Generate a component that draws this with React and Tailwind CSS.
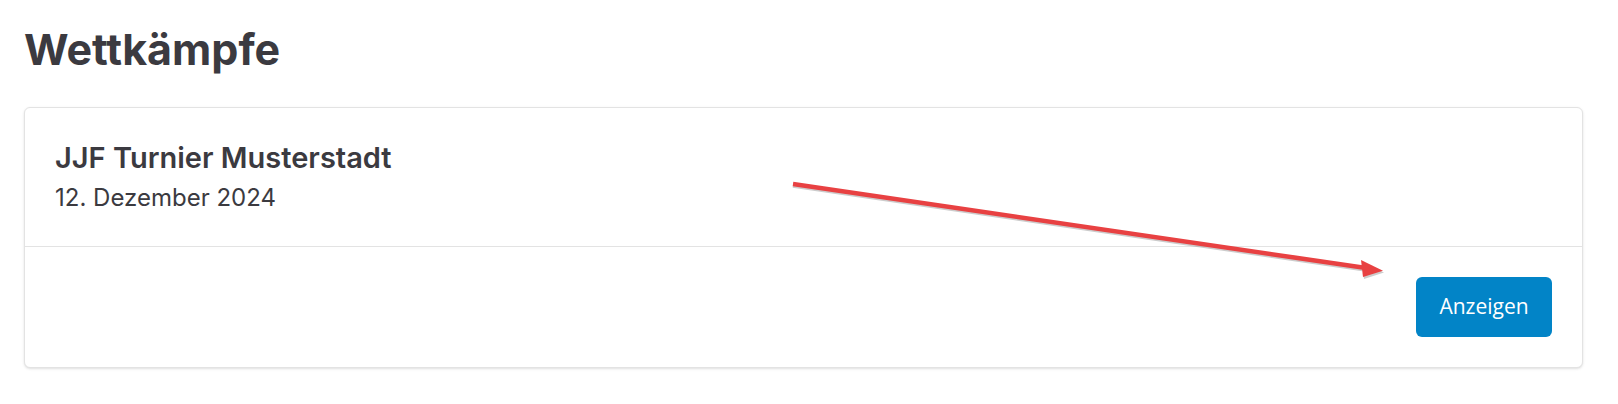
export default function App() {
  return (
    <div
      className="relative min-h-[404px] w-[1618px] bg-white pl-6 pt-[23px]"
      style={{ fontFamily: "Inter, 'Noto Sans', sans-serif" }}
    >
      <h1 className="text-[43px] font-bold leading-[53px] text-[#3b3a40]">
        Wettkämpfe
      </h1>
      <div className="mt-[31px] w-[1559px] rounded-md border border-[#e3e3e3] bg-white shadow-sm">
        <div className="border-b border-[#e3e3e3] px-[30px] pt-[30px] pb-[30px]">
          <h2 className="text-[29px] font-semibold leading-[40px] text-[#3b3a40]">
            JJF Turnier Musterstadt
          </h2>
          <p className="mt-[2px] text-[24px] leading-[36px] text-[#3b3a40]">12. Dezember 2024</p>
        </div>
        <div className="flex justify-end p-[30px]">
          <button
            className="h-[60px] w-[136px] rounded-md bg-[#0284c7] text-[21px] text-white"
            style={{ fontFamily: "'Open Sans', sans-serif" }}
          >
            Anzeigen
          </button>
        </div>
      </div>
      <svg
        className="pointer-events-none absolute left-0 top-0"
        width="1618"
        height="404"
        viewBox="0 0 1618 404"
      >
        <line x1="793" y1="185.5" x2="1366" y2="269.5" stroke="#9a9a9a" strokeOpacity="0.5" strokeWidth="4.5" />
        <polygon points="1384,272.5 1362,262 1364,279" fill="#9a9a9a" fillOpacity="0.5" />
        <line x1="793" y1="184" x2="1366" y2="268" stroke="#e84142" strokeWidth="4.5" />
        <polygon points="1383,270.7 1361,260 1363,277" fill="#e84142" />
      </svg>
    </div>
  );
}
